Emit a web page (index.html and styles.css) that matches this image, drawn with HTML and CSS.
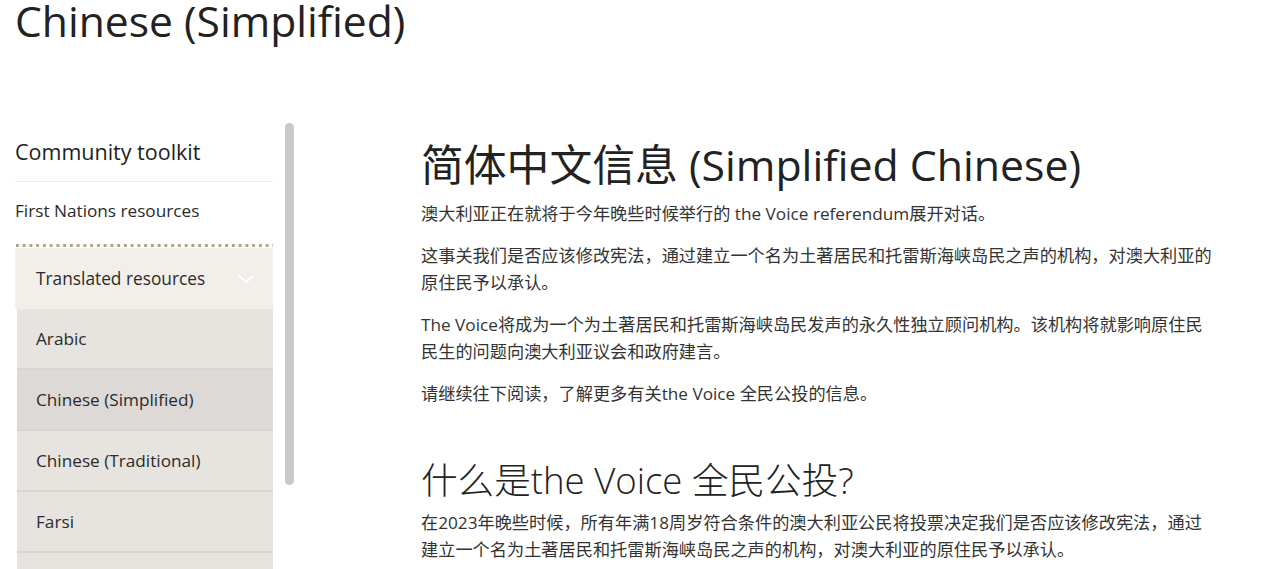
FILE: index.html
```html
<!DOCTYPE html>
<html lang="zh">
<head>
<meta charset="utf-8">
<title>Chinese (Simplified)</title>
<link rel="stylesheet" href="styles.css">
</head>
<body>
<header class="page-head">
  <h1 class="page-title">Chinese (Simplified)</h1>
</header>
<div class="layout">
  <aside class="side">
    <nav class="side-nav">
      <h2 class="side-title">Community toolkit</h2>
      <a class="side-link" href="#">First Nations resources</a>
      <div class="dots"></div>
      <div class="group">
        <div class="group-head">
          <span>Translated resources</span>
          <svg class="chev" width="18" height="12" viewBox="0 0 18 12"><path d="M2 3 L9 9 L16 3" fill="none" stroke="#fff" stroke-width="2.2" stroke-linecap="round" stroke-linejoin="round"/></svg>
        </div>
        <a class="sub" href="#">Arabic</a>
        <a class="sub active" href="#">Chinese (Simplified)</a>
        <a class="sub" href="#">Chinese (Traditional)</a>
        <a class="sub" href="#">Farsi</a>
        <a class="sub" href="#">Greek</a>
      </div>
    </nav>
    <div class="scroll-thumb"></div>
  </aside>
  <main class="content">
    <h2 class="h1">简体中文信息 (Simplified Chinese)</h2>
    <p>澳大利亚正在就将于今年晚些时候举行的 the Voice referendum展开对话。</p>
    <p>这事关我们是否应该修改宪法，通过建立一个名为土著居民和托雷斯海峡岛民之声的机构，对澳大利亚的原住民予以承认。</p>
    <p>The Voice将成为一个为土著居民和托雷斯海峡岛民发声的永久性独立顾问机构。该机构将就影响原住民民生的问题向澳大利亚议会和政府建言。</p>
    <p>请继续往下阅读，了解更多有关the Voice 全民公投的信息。</p>
    <h3 class="h2">什么是the Voice 全民公投?</h3>
    <p>在2023年晚些时候，所有年满18周岁符合条件的澳大利亚公民将投票决定我们是否应该修改宪法，通过建立一个名为土著居民和托雷斯海峡岛民之声的机构，对澳大利亚的原住民予以承认。</p>
  </main>
</div>
</body>
</html>
```
FILE: styles.css
```css
* { box-sizing: border-box; }
html, body { margin: 0; padding: 0; background: #fff; }
body {
  font-family: "Open Sans", "Noto Sans CJK SC", sans-serif;
  color: #2b2b2b;
  overflow: hidden;
  height: 569px;
}
.page-head { padding: 0 15px; }
.page-title {
  margin: 0;
  font-weight: 400;
  font-size: 42.6px;
  line-height: 40px;
  color: #222;
}
.layout {
  display: flex;
  margin-top: 83px;
  padding-left: 15px;
}
.side {
  display: flex;
  gap: 12px;
  flex: 0 0 279px;
}
.side-nav {
  width: 258px;
  display: flex;
  flex-direction: column;
  padding-top: 16px;
}
.side-title {
  margin: 0;
  font-size: 21.5px;
  font-weight: 400;
  line-height: 26px;
  color: #1e1e1e;
  padding-bottom: 16px;
  border-bottom: 1px solid #ebebeb;
}
.side-link {
  display: block;
  color: #2b2b2b;
  text-decoration: none;
  font-size: 17.2px;
  line-height: 20px;
  padding: 19px 0 22px;
}
.dots {
  height: 5px;
  background-image: radial-gradient(circle, #b0a47f 1.4px, transparent 1.7px);
  background-size: 6.75px 5px;
  background-position: -1px 0;
}
.group { display: flex; flex-direction: column; }
.group-head {
  height: 61px;
  background: #f2efea;
  display: flex;
  align-items: center;
  justify-content: space-between;
  padding: 0 18px 0 21px;
  font-size: 17.3px;
  color: #2b2b2b;
}
.chev { margin-top: 1px; }
.sub {
  display: flex;
  align-items: center;
  height: 61px;
  margin-left: 2px;
  padding-left: 19px;
  background: #e7e3de;
  border-bottom: 2px solid #d8d4cf;
  color: #2b2b2b;
  text-decoration: none;
  font-size: 17.2px;
}
.sub.active { background: #dcd9d7; }
.scroll-thumb {
  width: 9px;
  height: 362px;
  border-radius: 5px;
  background: #c9c9c9;
}
.content {
  margin-left: 127px;
  width: 792px;
  padding-top: 14px;
}
.h1 {
  margin: 0 0 7px;
  font-size: 42.8px;
  font-weight: 400;
  line-height: 56px;
  color: #222;
}
.content p {
  margin: 0 0 15px;
  font-size: 17.2px;
  line-height: 27px;
  color: #333;
}
.h2 {
  margin: 48px 0 4px;
  font-size: 36.6px;
  font-weight: 300;
  line-height: 50px;
  color: #222;
}
```
